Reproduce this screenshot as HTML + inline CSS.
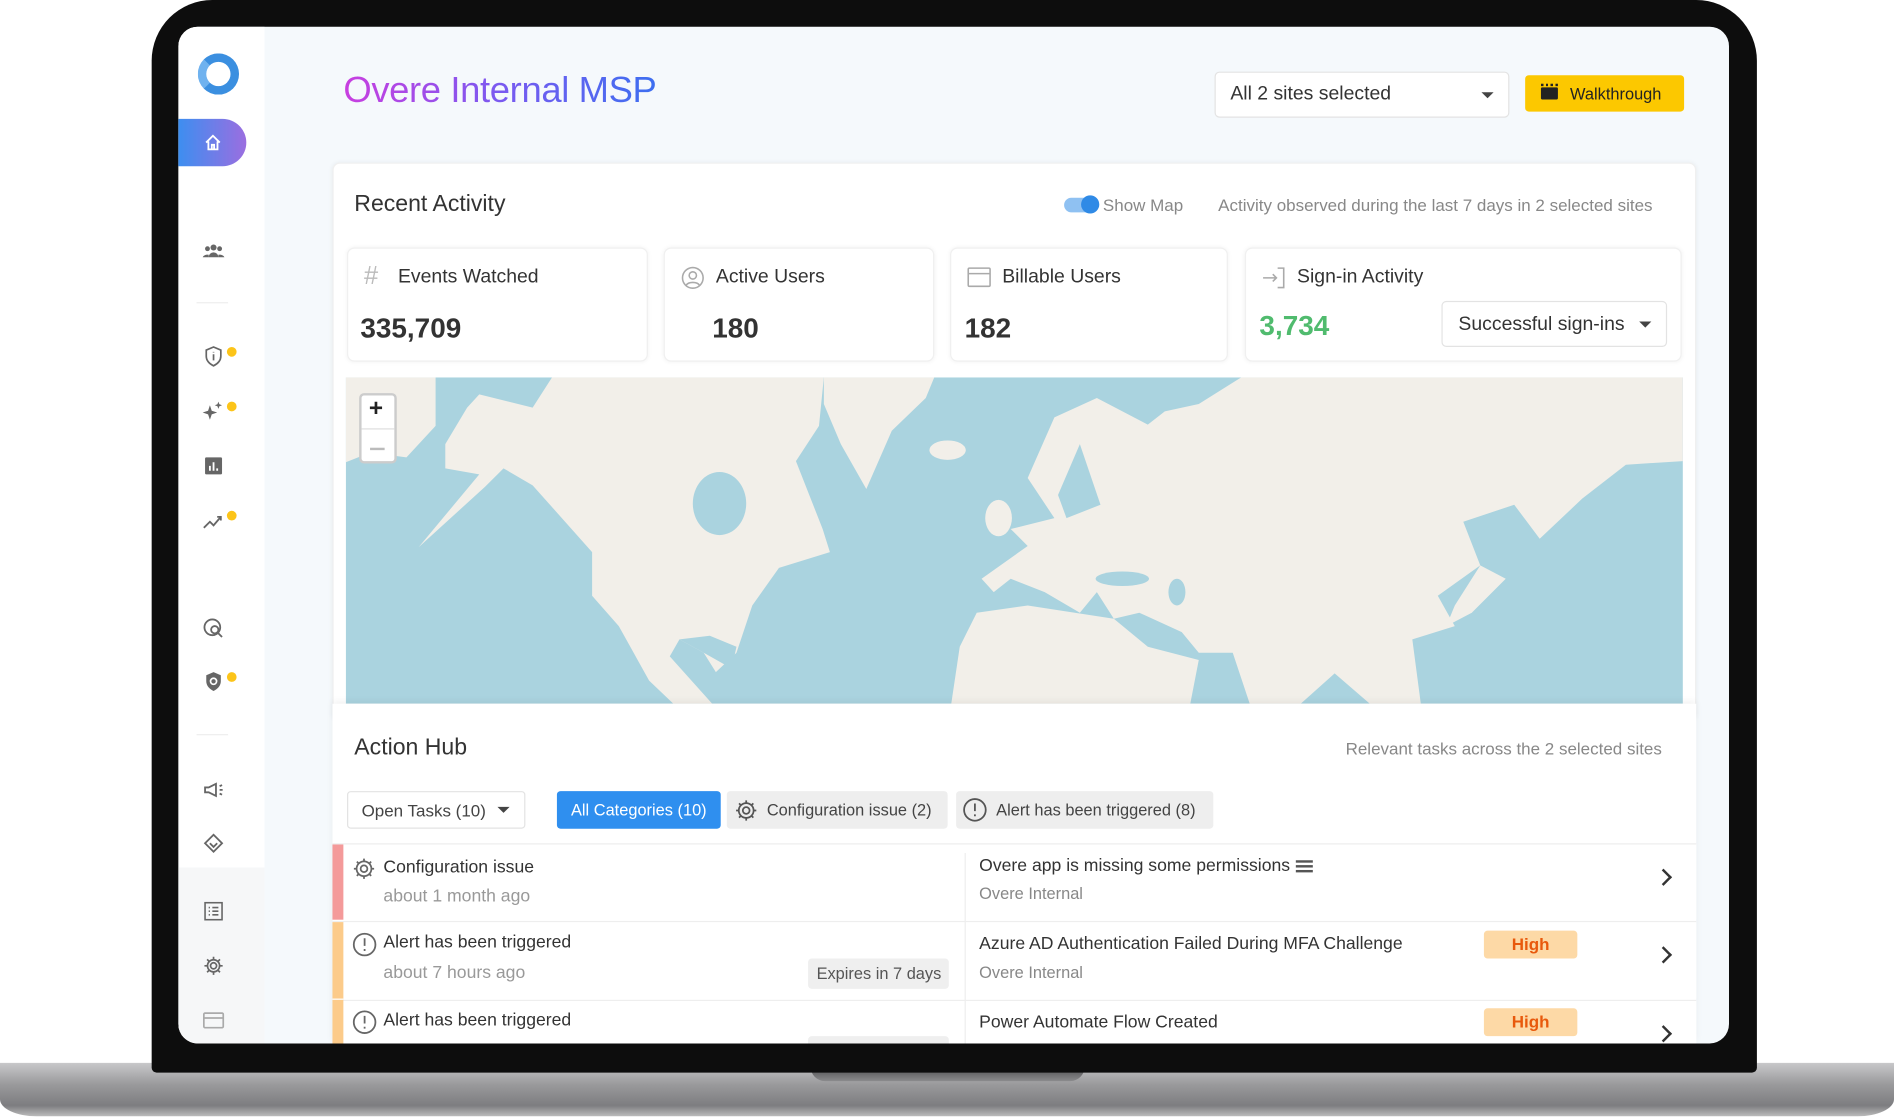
<!DOCTYPE html>
<html><head><meta charset="utf-8"><style>
*{box-sizing:border-box;margin:0;padding:0}
html,body{width:1894px;height:1118px;overflow:hidden;background:#fff;font-family:"Liberation Sans",Arial,sans-serif;}
#w{position:absolute;left:0;top:0;width:1561px;height:922px;transform:scale(1.21333);transform-origin:0 0;}
.a{position:absolute}
.t{position:absolute;white-space:nowrap}
.card{position:absolute;background:#fff;border-radius:6px;box-shadow:0 0 4px rgba(0,0,0,.06);border:1px solid #f0f0f0}
.ic{position:absolute;left:167px;width:18px;height:18px}
.dot{position:absolute;left:187px;width:8px;height:8px;border-radius:50%;background:#fcc419}
.lbl{font-size:16px;color:#333}
.val{font-size:23px;font-weight:bold;color:#333}
.g{color:#888}
.chip{position:absolute;top:652px;height:31px;border-radius:3px;font-size:13.5px;line-height:31px;color:#444;background:#eeeeee}
.row{position:absolute;left:274px;width:1124px;border-top:1px solid #eee;background:#fff}
.chev{position:absolute;left:1366px;width:10px;height:10px;border-right:2px solid #333;border-top:2px solid #333;transform:rotate(45deg)}
.high{position:absolute;left:1223px;width:77px;height:23px;border-radius:3px;background:#fdd9a6;color:#e8590c;font-size:14px;font-weight:bold;text-align:center;line-height:23px}
</style></head><body><div id="w">
<div class="a" style="left:0;top:876px;width:1561px;height:44px;background:linear-gradient(#c8c8ca,#9a9a9c 40%,#7d7d80 80%,#bbb);border-radius:0 0 30px 30px/0 0 14px 14px"></div>
<div class="a" style="left:668px;top:876px;width:226px;height:15px;background:linear-gradient(#3a3a3c,#8a8a8c);border-radius:0 0 12px 12px"></div>
<div class="a" style="left:125px;top:0;width:1323px;height:884px;background:#0d0d0d;border-radius:50px 50px 4px 4px"></div>
<div class="a" style="left:147px;top:22px;width:1278px;height:838px;background:#f5f9fc;border-radius:16px;overflow:hidden">
  <div class="a" style="left:0;top:0;width:71px;height:838px;background:#fff"></div>
  <div class="a" style="left:0;top:693px;width:71px;height:145px;background:#f6f7f8"></div>
</div>
<div class="a" style="left:163px;top:44px;width:34px;height:34px;border-radius:50%;border:7px solid #3b8fe0;border-left-color:#6fb2ef"></div>
<div class="a" style="left:147px;top:98px;width:56px;height:39px;border-radius:0 20px 20px 0;background:linear-gradient(90deg,#3d8ef0,#9b6ee0)"></div>
<svg class="a" style="left:168px;top:110px" width="15" height="15" viewBox="0 0 16 16" fill="none" stroke="#fff" stroke-width="1.6"><path d="M2 8L8 2l6 6M4 7v7h8V7M7 14v-4h2v4"/></svg>
<div class="a" style="left:162px;top:249px;width:26px;height:1px;background:#eee"></div>
<div class="a" style="left:162px;top:605px;width:26px;height:1px;background:#eee"></div>
<svg class="ic" style="top:198px" viewBox="0 0 18 18" fill="#666"><circle cx="9" cy="6" r="2.5"/><circle cx="4" cy="7" r="2"/><circle cx="14" cy="7" r="2"/><path d="M5 14a4 4 0 0 1 8 0zM0 14a4 3 0 0 1 5-2v2zM18 14a4 3 0 0 0-5-2v2z"/></svg>
<svg class="ic" style="top:285px" viewBox="0 0 18 18" fill="none" stroke="#666" stroke-width="1.4"><path d="M9 1l6 2.5v5c0 4-3 6.5-6 8-3-1.5-6-4-6-8v-5z"/><path d="M9 7v5M9 5v.5"/></svg>
<svg class="ic" style="top:330px" viewBox="0 0 18 18" fill="#666"><path d="M6 4l1.5 4.5L12 10l-4.5 1.5L6 16l-1.5-4.5L0 10l4.5-1.5z"/><path d="M13 1l.8 2.2L16 4l-2.2.8L13 7l-.8-2.2L10 4l2.2-.8z"/></svg>
<svg class="ic" style="top:375px" viewBox="0 0 18 18"><rect x="2" y="2" width="14" height="14" rx="1" fill="#666"/><path d="M6 13V9M9 13V6M12 13v-2" stroke="#fff" stroke-width="1.5"/></svg>
<svg class="ic" style="top:420px" viewBox="0 0 18 18" fill="none" stroke="#666" stroke-width="1.5"><path d="M1 15l5-5 3 3 6-7"/><path d="M12 6h3v3"/></svg>
<svg class="ic" style="top:509px" viewBox="0 0 18 18" fill="none" stroke="#666" stroke-width="1.5"><circle cx="8" cy="8" r="6.5"/><circle cx="10" cy="10" r="3"/><path d="M12 12l4 4"/></svg>
<svg class="ic" style="top:553px" viewBox="0 0 18 18"><path d="M9 1l6 2.5v5c0 4-3 6.5-6 8-3-1.5-6-4-6-8v-5z" fill="#666"/><circle cx="9" cy="8.5" r="2.5" fill="none" stroke="#fff" stroke-width="1.4"/></svg>
<svg class="ic" style="top:642px" viewBox="0 0 18 18" fill="none" stroke="#666" stroke-width="1.5"><path d="M2 7v4h3l6 3V4L5 7z"/><path d="M14 6l2-1M14 9h2.5M14 12l2 1"/></svg>
<svg class="ic" style="top:686px" viewBox="0 0 18 18" fill="none" stroke="#666" stroke-width="1.5"><path d="M9 2l7 7-7 7-7-7z"/><path d="M6 9l3 3 3-3"/></svg>
<svg class="ic" style="top:742px" viewBox="0 0 18 18" fill="none" stroke="#666" stroke-width="1.3"><rect x="2" y="2" width="14" height="14"/><path d="M5 6h1M5 9h1M5 12h1M8 6h5M8 9h5M8 12h5"/></svg>
<svg class="ic" style="top:787px" viewBox="0 0 18 18" fill="none" stroke="#666" stroke-width="1.4"><circle cx="9" cy="9" r="2.5"/><path d="M9 1.5v2.5M9 14v2.5M1.5 9H4M14 9h2.5M3.7 3.7l1.8 1.8M12.5 12.5l1.8 1.8M3.7 14.3l1.8-1.8M12.5 5.5l1.8-1.8"/><circle cx="9" cy="9" r="5"/></svg>
<svg class="ic" style="top:832px" viewBox="0 0 18 18" fill="none" stroke="#aaa" stroke-width="1.4"><rect x="1" y="3" width="16" height="12" rx="1"/><path d="M1 7h16"/></svg>
<div class="dot" style="top:286px"></div><div class="dot" style="top:331px"></div><div class="dot" style="top:421px"></div><div class="dot" style="top:554px"></div>
<div class="t" style="left:283px;top:58px;font-size:30px;background:linear-gradient(90deg,#c93fe0,#7a5af0 50%,#3d6ff0);-webkit-background-clip:text;background-clip:text;color:transparent;letter-spacing:-.3px">Overe Internal MSP</div>
<div class="a" style="left:1001px;top:59px;width:243px;height:38px;background:#fff;border:1px solid #e3e3e3;border-radius:4px"></div>
<div class="t lbl" style="left:1014px;top:69px">All 2 sites selected</div>
<div class="a" style="left:1221px;top:76px;border:5px solid transparent;border-top-color:#444"></div>
<div class="a" style="left:1257px;top:62px;width:131px;height:30px;background:#fcc800;border-radius:3px"></div>
<div class="a" style="left:1270px;top:72px;width:14px;height:10px;background:#222;border-radius:1px"></div>
<div class="a" style="left:1270px;top:69px;width:14px;height:2px;background:repeating-linear-gradient(90deg,#222 0 2px,transparent 2px 4px)"></div>
<div class="t" style="left:1294px;top:70px;font-size:13.5px;color:#222">Walkthrough</div>
<div class="card" style="left:274px;top:134px;width:1124px;height:460px"></div>
<div class="t" style="left:292px;top:158px;font-size:19px;color:#333">Recent Activity</div>
<div class="a" style="left:877px;top:163px;width:28px;height:12px;border-radius:6px;background:#8fc1f2"></div>
<div class="a" style="left:891px;top:161px;width:15px;height:15px;border-radius:50%;background:#2f8ae6"></div>
<div class="t g" style="left:909px;top:161px;font-size:14px">Show Map</div>
<div class="t g" style="left:1004px;top:161px;font-size:14px">Activity observed during the last 7 days in 2 selected sites</div>
<div class="card" style="left:286px;top:204px;width:248px;height:94px"></div>
<div class="card" style="left:547px;top:204px;width:223px;height:94px"></div>
<div class="card" style="left:783px;top:204px;width:229px;height:94px"></div>
<div class="card" style="left:1026px;top:204px;width:360px;height:94px"></div>
<div class="t" style="left:300px;top:216px;font-size:21px;color:#bbb">#</div>
<div class="t lbl" style="left:328px;top:220px">Events Watched</div>
<div class="t val" style="left:297px;top:257px">335,709</div>
<svg class="a" style="left:561px;top:219px" width="20" height="20" viewBox="0 0 20 20" fill="none" stroke="#aaa" stroke-width="1.3"><circle cx="10" cy="10" r="8.5"/><circle cx="10" cy="8" r="3"/><path d="M4.5 16c2-3 9-3 11 0"/></svg>
<div class="t lbl" style="left:590px;top:220px">Active Users</div>
<div class="t val" style="left:587px;top:257px">180</div>
<svg class="a" style="left:797px;top:220px" width="20" height="17" viewBox="0 0 20 17" fill="none" stroke="#aaa" stroke-width="1.3"><rect x="1" y="1" width="18" height="15" rx="1"/><path d="M1 5.5h18"/></svg>
<div class="t lbl" style="left:826px;top:220px">Billable Users</div>
<div class="t val" style="left:795px;top:257px">182</div>
<svg class="a" style="left:1040px;top:219px" width="20" height="20" viewBox="0 0 20 20" fill="none" stroke="#aaa" stroke-width="1.3"><path d="M1 10h11M9 7l3 3-3 3M13 2h5v16h-5"/></svg>
<div class="t lbl" style="left:1069px;top:220px">Sign-in Activity</div>
<div class="t val" style="left:1038px;top:255px;color:#50bb6e">3,734</div>
<div class="a" style="left:1188px;top:248px;width:186px;height:38px;border:1px solid #e3e3e3;border-radius:4px;background:#fff"></div>
<div class="t lbl" style="left:1202px;top:259px">Successful sign-ins</div>
<div class="a" style="left:1351px;top:265px;border:5px solid transparent;border-top-color:#444"></div>
<svg class="a" style="left:285px;top:311px" width="1102" height="269" viewBox="0 0 1102 269">
<rect width="1102" height="269" fill="#aad3df"/>
<g fill="#f2efe9">
<path d="M82 55L100 25L110 14L154 25L170 0L394 0L390 40L371 69L393 125L399 144L357 157L335 188L322 227L305 243L295 227L275 216L267 230L302 269L270 269L250 250L225 205L203 180L203 144L154 89L130 75L115 90L60 140L110 80L82 75Z"/>
<path d="M0 0L74 0L74 40L50 66L20 62L0 70Z"/>
<path d="M394 0L485 0L478 17L450 44L429 92L408 55L394 22Z"/>
<ellipse cx="496" cy="60" rx="15" ry="8"/>
<path d="M584 33L619 17L661 39L675 28L703 22L738 0L1102 0L1102 69L1055 72L1019 100L984 133L963 105L921 119L935 155L900 180L914 205L879 216L886 269L844 269L815 244L787 269L745 269L731 227L703 227L689 210L654 194L633 199L619 177L605 194L576 177L548 166L534 177L524 166L562 139L548 125L584 116L562 83Z"/>
<ellipse cx="538" cy="116" rx="11" ry="15"/>
<path d="M520 194L562 188L633 199L661 222L703 233L696 269L499 269L506 222Z"/>
<path d="M935 155L956 166L928 194L907 205L914 188Z"/>
</g>
<g fill="#aad3df"><ellipse cx="308" cy="104" rx="22" ry="26"/><path d="M605 55L622 105L594 116L587 97Z"/><ellipse cx="640" cy="166" rx="22" ry="6"/><ellipse cx="685" cy="177" rx="7" ry="11"/><path d="M275 216L300 213L322 222L318 240L295 227Z"/></g>
</svg>
<div class="a" style="left:296px;top:324px;width:31px;height:58px;background:#fff;border:2px solid #ccc;border-radius:4px"></div>
<div class="a" style="left:298px;top:353px;width:27px;height:1px;background:#ddd"></div>
<div class="t" style="left:304px;top:326px;font-size:20px;font-weight:bold;color:#222">+</div>
<div class="a" style="left:305px;top:369px;width:12px;height:2px;background:#bbb"></div>
<div class="a" style="left:274px;top:580px;width:1124px;height:280px;background:#fff;box-shadow:0 -2px 6px rgba(0,0,0,.06)"></div>
<div class="t" style="left:292px;top:606px;font-size:19px;color:#333">Action Hub</div>
<div class="t g" style="left:1109px;top:609px;font-size:14px">Relevant tasks across the 2 selected sites</div>
<div class="a" style="left:286px;top:652px;width:147px;height:31px;border:1px solid #e3e3e3;border-radius:3px;background:#fff"></div>
<div class="t" style="left:298px;top:660px;font-size:14px;color:#444">Open Tasks (10)</div>
<div class="a" style="left:410px;top:665px;border:5px solid transparent;border-top-color:#444"></div>
<div class="chip" style="left:459px;width:135px;background:#2f8fef;color:#fff;text-align:center">All Categories (10)</div>
<div class="chip" style="left:599px;width:182px;padding-left:33px">Configuration issue (2)</div>
<svg class="a" style="left:605px;top:658px" width="20" height="20" viewBox="0 0 18 18" fill="none" stroke="#555" stroke-width="1.3"><circle cx="9" cy="9" r="2.5"/><circle cx="9" cy="9" r="5.5"/><path d="M9 1.5v2M9 14.5v2M1.5 9h2M14.5 9h2M3.7 3.7l1.4 1.4M12.9 12.9l1.4 1.4M3.7 14.3l1.4-1.4M12.9 5.1l1.4-1.4"/></svg>
<div class="chip" style="left:788px;width:212px;padding-left:33px">Alert has been triggered (8)</div>
<svg class="a" style="left:793px;top:657px" width="21" height="21" viewBox="0 0 20 20" fill="none" stroke="#555" stroke-width="1.4"><circle cx="10" cy="10" r="8.5"/><path d="M10 5v6M10 13.5v1.5"/></svg>
<div class="row" style="top:695px;height:63px"></div>
<div class="row" style="top:759px;height:64px"></div>
<div class="row" style="top:824px;height:36px"></div>
<div class="a" style="left:274px;top:696px;width:9px;height:62px;background:#f49a9a"></div>
<div class="a" style="left:274px;top:760px;width:9px;height:100px;background:#fccb8a"></div>
<div class="a" style="left:274px;top:823px;width:9px;height:1px;background:#fff"></div>
<div class="a" style="left:795px;top:703px;width:1px;height:157px;background:#eee"></div>
<svg class="a" style="left:290px;top:706px" width="20" height="20" viewBox="0 0 18 18" fill="none" stroke="#666" stroke-width="1.3"><circle cx="9" cy="9" r="2.5"/><circle cx="9" cy="9" r="5.5"/><path d="M9 1.5v2M9 14.5v2M1.5 9h2M14.5 9h2M3.7 3.7l1.4 1.4M12.9 12.9l1.4 1.4M3.7 14.3l1.4-1.4M12.9 5.1l1.4-1.4"/></svg>
<div class="t" style="left:316px;top:707px;font-size:14.5px;color:#333">Configuration issue</div>
<div class="t g" style="left:316px;top:731px;font-size:14.5px;color:#999">about 1 month ago</div>
<div class="t" style="left:807px;top:706px;font-size:14.5px;color:#333">Overe app is missing some permissions</div>
<div class="a" style="left:1068px;top:709px;width:14px;height:2px;background:#555;box-shadow:0 4px 0 #555,0 8px 0 #555"></div>
<div class="t g" style="left:807px;top:729px;font-size:13.5px">Overe Internal</div>
<div class="chev" style="top:718px"></div>
<svg class="a" style="left:290px;top:768px" width="21" height="21" viewBox="0 0 20 20" fill="none" stroke="#666" stroke-width="1.4"><circle cx="10" cy="10" r="8.5"/><path d="M10 5v6M10 13.5v1.5"/></svg>
<div class="t" style="left:316px;top:769px;font-size:14.5px;color:#333">Alert has been triggered</div>
<div class="t" style="left:316px;top:794px;font-size:14.5px;color:#999">about 7 hours ago</div>
<div class="a" style="left:666px;top:790px;width:116px;height:25px;background:#efefef;border-radius:3px"></div>
<div class="t" style="left:673px;top:795px;font-size:13.5px;color:#555">Expires in 7 days</div>
<div class="t" style="left:807px;top:770px;font-size:14.5px;color:#333">Azure AD Authentication Failed During MFA Challenge</div>
<div class="t g" style="left:807px;top:794px;font-size:13.5px">Overe Internal</div>
<div class="high" style="top:767px">High</div>
<div class="chev" style="top:782px"></div>
<svg class="a" style="left:290px;top:832px" width="21" height="21" viewBox="0 0 20 20" fill="none" stroke="#666" stroke-width="1.4"><circle cx="10" cy="10" r="8.5"/><path d="M10 5v6M10 13.5v1.5"/></svg>
<div class="t" style="left:316px;top:833px;font-size:14.5px;color:#333">Alert has been triggered</div>
<div class="a" style="left:666px;top:854px;width:116px;height:6px;background:#efefef;border-radius:3px 3px 0 0"></div>
<div class="t" style="left:807px;top:835px;font-size:14.5px;color:#333">Power Automate Flow Created</div>
<div class="high" style="top:831px">High</div>
<div class="chev" style="top:847px"></div>
</div></body></html>
